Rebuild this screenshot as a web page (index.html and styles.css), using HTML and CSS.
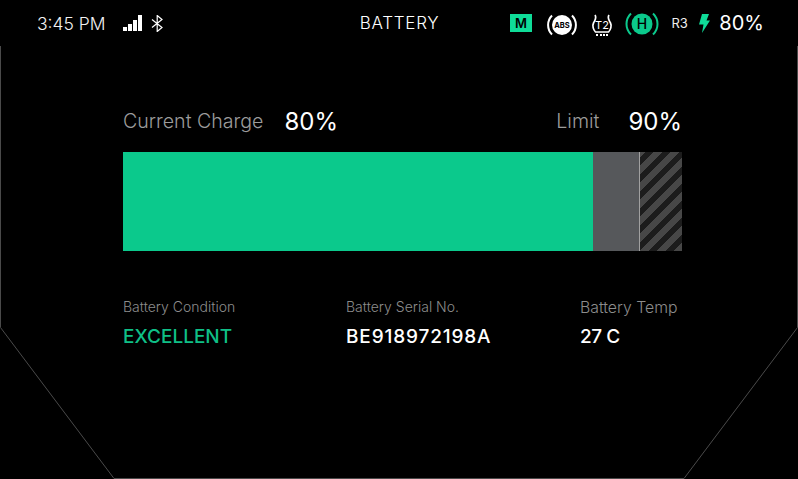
FILE: index.html
```html
<!DOCTYPE html>
<html lang="en">
<head>
<meta charset="utf-8">
<title>Battery</title>
<link rel="stylesheet" href="styles.css">
</head>
<body>
<svg class="frame" width="798" height="479" viewBox="0 0 798 479" aria-hidden="true">
  <path d="M0.500 46V327.500L114 478.500H684L797.500 327.500V46" fill="none" stroke="#4a4a4a"/>
</svg>
<div class="screen">
  <header class="status">
    <div class="status-left">
      <span class="time">3:45 PM</span>
      <svg class="signal" width="19" height="16" viewBox="0 0 19 16"><path d="M0 12h4v4H0zM5 9h4v7H5zM10 5h4v11h-4zM15 0h4v16h-4z" fill="#fff"/></svg>
      <svg class="bt" width="13" height="17" viewBox="0 0 13 17"><path d="M1 4.500l10 8-4.800 4V.5l4.800 4-10 8" fill="none" stroke="#fff" stroke-width="1.200"/></svg>
    </div>
    <div class="status-title">BATTERY</div>
    <div class="status-right">
      <span class="badge-m">M</span>
      <svg class="ico ico-abs" width="30" height="26" viewBox="0 0 30 26">
        <circle cx="15" cy="15" r="10" fill="#fff"/>
        <path d="M5 5.500a13.500 13.500 0 0 0 0 19M25 5.500a13.500 13.500 0 0 1 0 19" fill="none" stroke="#fff" stroke-width="2"/>
        <text x="15" y="18" class="abs-text">ABS</text>
      </svg>
      <svg class="ico ico-t2" width="24" height="26" viewBox="0 0 24 26">
        <g transform="translate(0 3)">
          <path d="M5 2c2 3 0 5-1.500 8s0 7 2 9h13c2-2 3.500-6 2-9S17 5 19 2" fill="none" stroke="#fff" stroke-width="1.700"/>
          <path d="M6 22h2M10 22h2M13 22h2M16 22h2" stroke="#fff" stroke-width="2"/>
          <text x="12" y="16" class="t2-text">T2</text>
        </g>
      </svg>
      <svg class="ico ico-h" width="30" height="26" viewBox="0 0 30 26">
        <circle cx="15" cy="14" r="10.500" fill="#0bc98c"/>
        <path d="M4 3.500a14.500 14.500 0 0 0 0 21M26 3.500a14.500 14.500 0 0 1 0 21" fill="none" stroke="#0bc98c" stroke-width="2"/>
        <text x="15" y="19" class="h-text">H</text>
      </svg>
      <span class="gear">R3</span>
      <svg class="bolt" width="11" height="19" viewBox="0 0 11 19"><path d="M3 0h7L7.500 6.500H11L3 19l1.500-8.500H0z" fill="#0fdc98"/></svg>
      <span class="pct">80%</span>
    </div>
  </header>
  <main class="content">
    <div class="charge-head">
      <div class="charge-item">
        <span class="charge-label">Current Charge</span>
        <span class="charge-value">80%</span>
      </div>
      <div class="charge-item limit">
        <span class="charge-label">Limit</span>
        <span class="charge-value">90%</span>
      </div>
    </div>
    <div class="bar">
      <div class="bar-fill"></div>
      <div class="bar-rest"></div>
      <div class="bar-over"></div>
    </div>
    <div class="details">
      <div class="detail d1">
        <div class="detail-label">Battery Condition</div>
        <div class="detail-value good">EXCELLENT</div>
      </div>
      <div class="detail d2">
        <div class="detail-label">Battery Serial No.</div>
        <div class="detail-value serial">BE918972198A</div>
      </div>
      <div class="detail d3">
        <div class="detail-label big">Battery Temp</div>
        <div class="detail-value temp">27 C</div>
      </div>
    </div>
  </main>
</div>
</body>
</html>
```
FILE: styles.css
```css
* { box-sizing: border-box; }
html, body { margin: 0; padding: 0; }
body {
  width: 798px;
  height: 479px;
  background: #000;
  color: #fff;
  font-family: "Inter", "Liberation Sans", sans-serif;
  overflow: hidden;
  position: relative;
}
.frame { position: absolute; left: 0; top: 0; }
.screen { position: relative; display: flex; flex-direction: column; height: 100%; }
.status {
  height: 46px;
  display: grid;
  grid-template-columns: 1fr auto 1fr;
  align-items: center;
  padding: 0 34px 0 37px;
}
.status-left { display: flex; align-items: center; }
.time { font-size: 17.500px; color: #f2f2f2; font-weight: 300; }
.signal { margin-left: 17px; }
.bt { margin-left: 9px; }
.status-title { font-size: 17px; font-weight: 300; letter-spacing: .75px; padding-right: 2px; }
.status-right { display: flex; align-items: center; justify-content: flex-end; }
.badge-m {
  width: 22px; height: 18px; background: #0fdc98; color: #000;
  font-size: 13px; font-weight: 600; text-align: center; line-height: 18px;
}
.ico { overflow: visible; }
.ico-abs { margin-left: 15.500px; }
.ico-t2 { margin-left: 13px; }
.ico-h { margin-left: 13px; }
.abs-text { font-size: 7.500px; font-weight: 700; fill: #000; text-anchor: middle; }
.t2-text { font-size: 11px; fill: #fff; text-anchor: middle; }
.h-text { font-size: 14px; font-weight: 500; fill: #000; text-anchor: middle; }
.gear { font-size: 13px; margin-left: 14px; color: #eee; }
.bolt { margin-left: 11px; }
.pct { font-size: 20px; margin-left: 9.500px; font-weight: 400; }
.content { width: 559px; margin-left: 123px; padding-top: 58px; }
.charge-head { display: flex; justify-content: space-between; align-items: center; height: 34px; }
.charge-item { display: flex; align-items: center; }
.charge-label { font-size: 19.600px; color: #9c9c9c; font-weight: 300; }
.charge-value { font-size: 24px; margin-left: 21px; font-weight: 400; }
.limit .charge-value { margin-left: 29px; }
.bar { display: flex; height: 99px; margin-top: 14px; }
.bar-fill { width: 470px; background: #0bc98c; }
.bar-rest { width: 47px; background: #56585b; border-right: 1px solid #a0a0a0; }
.bar-over {
  flex: 1;
  background: repeating-linear-gradient(-45deg, #474747 0 6px, #1c1c1c 6px 12px);
}
.details { position: relative; display: flex; margin-top: 47px; }
.detail-label { font-size: 14px; color: #8c8c8c; font-weight: 300; height: 17px; line-height: 17px; }
.detail-label.big { font-size: 15.800px; line-height: 19px; }
.detail-value { font-size: 19px; font-weight: 500; margin-top: 10px; line-height: 24px; }
.serial { letter-spacing: .85px; }
.temp { letter-spacing: -.5px; }
.good { color: #0fbf86; }
.d1 { width: 223px; }
.d2 { width: 234px; }
.d3 { flex: 1; }
```
